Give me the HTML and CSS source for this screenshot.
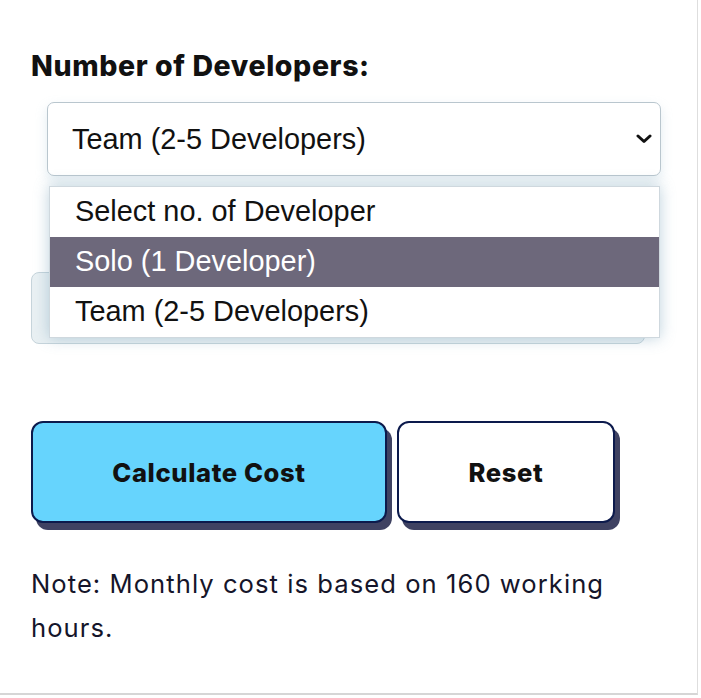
FILE: index.html
```html
<!DOCTYPE html>
<html lang="en">
<head>
<meta charset="utf-8">
<title>Developer Cost Calculator</title>
<link rel="stylesheet" href="styles.css">
</head>
<body>
<div class="card">
  <h2 class="label">Number of Developers:</h2>
  <div class="select">
    <span class="select-value">Team (2-5 Developers)</span>
    <svg class="chevron" width="16" height="10" viewBox="0 0 16 10"><polyline points="2,2 8,7.5 14,2" fill="none" stroke="#111" stroke-width="3" stroke-linecap="round" stroke-linejoin="round"/></svg>
  </div>
  <div class="field"></div>
  <div class="actions">
    <button class="btn btn-primary">Calculate Cost</button>
    <button class="btn btn-secondary">Reset</button>
  </div>
  <p class="note">Note: Monthly cost is based on 160 working hours.</p>

  <ul class="menu">
    <li class="option">Select no. of Developer</li>
    <li class="option option-active">Solo (1 Developer)</li>
    <li class="option">Team (2-5 Developers)</li>
  </ul>
</div>
</body>
</html>
```

FILE: styles.css
```css
html, body {
  margin: 0;
  padding: 0;
  background: #ffffff;
}

.card {
  position: relative;
  box-sizing: border-box;
  width: 698px;
  height: 695px;
  padding: 46px 0 0 31px;
  border-right: 1px solid #dedede;
  border-bottom: 2px solid #d6d6d6;
  font-family: "Inter", "Open Sans", sans-serif;
  color: #121212;
}

.label {
  margin: 0;
  font-size: 28.5px;
  line-height: 40px;
  font-weight: 800;
  letter-spacing: 0.6px;
  color: #111;
}

.select {
  box-sizing: border-box;
  margin: 16px 0 0 16px;
  width: 614px;
  height: 74px;
  display: flex;
  align-items: center;
  justify-content: space-between;
  padding: 0 8px 0 24px;
  background: #fff;
  border: 1px solid #b9c6ce;
  border-radius: 7px;
  box-shadow: 0 5px 12px rgba(150, 185, 205, 0.28);
  font-family: "Liberation Sans", Arial, sans-serif;
  font-size: 28.9px;
  color: #111;
}

.chevron {
  display: block;
}

.field {
  box-sizing: border-box;
  margin-top: 96px;
  width: 614px;
  height: 72px;
  background: #e9f0f3;
  border: 1px solid #c6d4db;
  border-radius: 8px;
}

.actions {
  display: flex;
  gap: 10px;
  margin-top: 77px;
}

.btn {
  box-sizing: border-box;
  height: 102px;
  border: 2px solid #0c1a4c;
  border-radius: 12px;
  box-shadow: 5px 7px 0 #3f4262;
  font-family: "Inter", "Open Sans", sans-serif;
  font-size: 25.6px;
  font-weight: 800;
  letter-spacing: 0.6px;
  color: #111;
  cursor: pointer;
}

.btn-primary {
  width: 356px;
  background: #66d4fd;
}

.btn-secondary {
  width: 218px;
  background: #ffffff;
}

.note {
  margin: 39px 0 0 0;
  width: 620px;
  font-size: 25.6px;
  line-height: 44px;
  letter-spacing: 1.05px;
  color: #15152a;
}

.menu {
  position: absolute;
  left: 49px;
  top: 186px;
  box-sizing: border-box;
  width: 611px;
  margin: 0;
  padding: 0;
  list-style: none;
  background: #fff;
  border: 1px solid #cfd8de;
  box-shadow: 0 0 14px rgba(110, 155, 180, 0.45);
  font-family: "Liberation Sans", Arial, sans-serif;
  font-size: 28.9px;
  color: #111;
}

.option {
  height: 50px;
  line-height: 48px;
  padding-left: 25px;
}

.option-active {
  background: #6d687b;
  color: #ffffff;
}
```
